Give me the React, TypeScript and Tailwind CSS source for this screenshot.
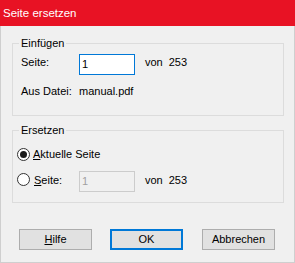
import React from "react";

function Radio({ checked }: { checked?: boolean }) {
  return (
    <span className="flex h-[13px] w-[13px] shrink-0 items-center justify-center rounded-full border border-[#333333] bg-white">
      {checked && <span className="h-[7px] w-[7px] rounded-full bg-[#1a1a1a]" />}
    </span>
  );
}

function Group({ label, className, children }: { label: string; className?: string; children: React.ReactNode }) {
  return (
    <div className={`relative border border-[#dcdcdc] ${className ?? ""}`}>
      <span className="absolute -top-[7px] left-[6px] bg-[#f0f0f0] px-[2px]">{label}</span>
      {children}
    </div>
  );
}

export default function App() {
  return (
    <div className="flex h-[263px] w-[295px] flex-col font-['Liberation_Sans',Arial,sans-serif] text-[11px] leading-[13px] text-black">
      {/* Title bar */}
      <div className="flex h-[26px] shrink-0 items-center bg-[#e81224] pl-[3px] text-[11.5px] text-white">Seite ersetzen</div>

      <div className="flex flex-1 flex-col border-x border-b border-[#cfcfcf] bg-[#f0f0f0] pl-[11px] pr-[10px]">
        {/* Einfügen */}
        <Group label="Einfügen" className="mt-[17px] pb-[17px] pl-[8px] pt-[10px]">
          <div className="flex h-[21px] items-start">
            <span className="mt-[2px] w-[58px]">Seite:</span>
            <div className="flex h-[21px] w-[56px] items-center border border-[#0078d7] bg-white pl-[2px]">1</div>
            <span className="ml-[10px] mt-[2px]">von</span>
            <span className="ml-[6px] mt-[2px]">253</span>
          </div>
          <div className="mt-[10px] flex">
            <span className="w-[58px]">Aus Datei:</span>
            <span>manual.pdf</span>
          </div>
        </Group>

        {/* Ersetzen */}
        <Group label="Ersetzen" className="mt-[14px] pb-[10px] pl-[4px] pt-[17px]">
          <div className="flex h-[13px] items-center gap-[3px]">
            <Radio checked />
            <span>
              <u className="underline-offset-1">A</u>ktuelle Seite
            </span>
          </div>
          <div className="mt-[10px] flex h-[21px] items-start">
            <div className="mt-[2px]">
              <Radio />
            </div>
            <span className="ml-[4px] mt-[3px] w-[45px]">
              <u className="underline-offset-1">S</u>eite:
            </span>
            <div className="flex h-[21px] w-[56px] items-center border border-[#cccccc] bg-[#f0f0f0] pl-[2px] text-[#a0a0a0]">1</div>
            <span className="ml-[10px] mt-[3px]">von</span>
            <span className="ml-[6px] mt-[3px]">253</span>
          </div>
        </Group>

        {/* Buttons */}
        <div className="mt-[26px] flex gap-[18px] pl-[7px]">
          <button className="flex h-[21px] w-[73px] items-center justify-center border border-[#adadad] bg-[#e1e1e1]">
            <span>
              <u className="underline-offset-1">H</u>ilfe
            </span>
          </button>
          <button className="flex h-[21px] w-[73px] items-center justify-center border-2 border-[#0078d7] bg-[#e1e1e1]">OK</button>
          <button className="ml-[1px] flex h-[21px] w-[73px] items-center justify-center border border-[#adadad] bg-[#e1e1e1]">Abbrechen</button>
        </div>
      </div>
    </div>
  );
}
